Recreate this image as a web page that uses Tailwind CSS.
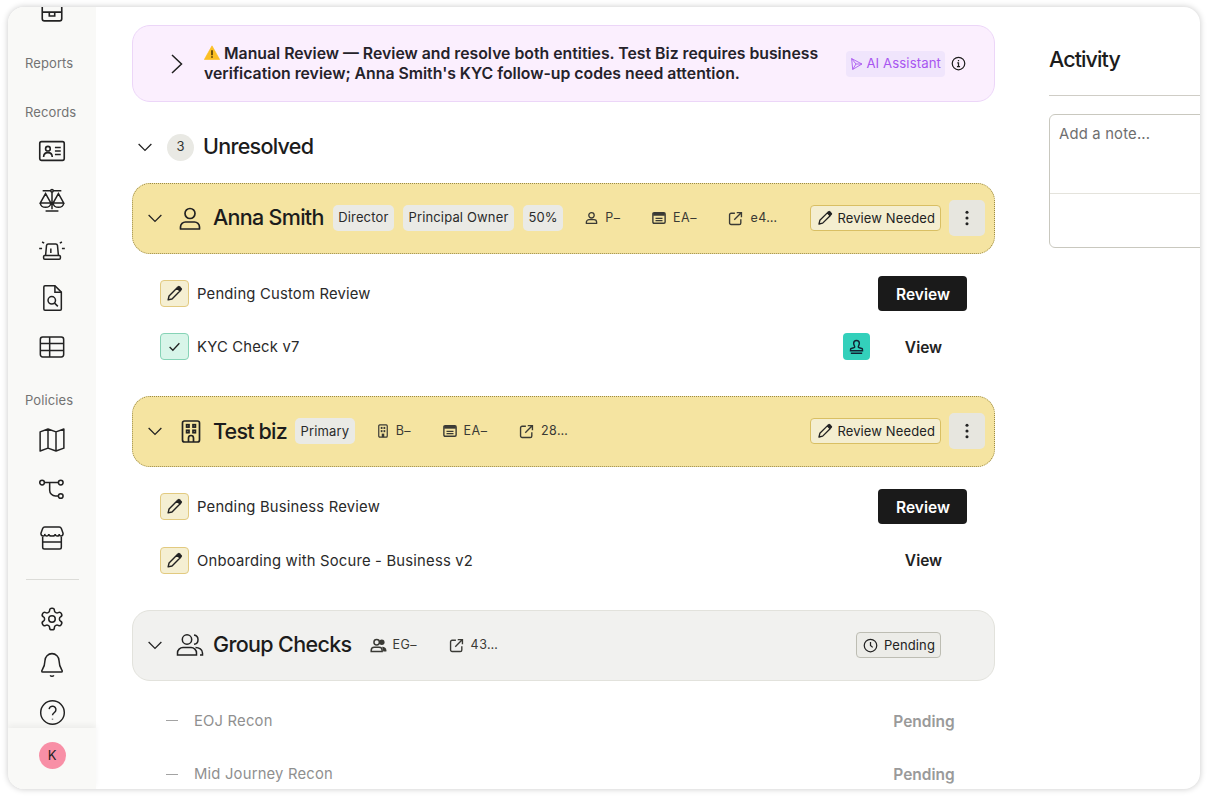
<!DOCTYPE html>
<html lang="en">
<head>
<meta charset="utf-8">
<title>Review</title>
<script src="https://cdn.jsdelivr.net/npm/@tailwindcss/browser@4"></script>
</head>
<body class="bg-white font-['Inter',sans-serif] text-[#1f1f1f] overflow-hidden">
<svg width="0" height="0" class="absolute">
  <defs>
    <symbol id="chev-d" viewBox="0 0 24 24"><path d="M3.5 8l8.5 8.5L20.5 8" fill="none" stroke="currentColor" stroke-width="1.7"/></symbol>
    <symbol id="person" viewBox="0 0 24 24"><g fill="none" stroke="currentColor" stroke-width="1.7"><circle cx="12" cy="7" r="5"/><path d="M2.500 22.500v-2c0-3 2.500-5 5-5h9c2.500 0 5 2 5 5v2z" stroke-linejoin="round"/></g></symbol>
    <symbol id="person-sm" viewBox="0 0 24 24"><g fill="none" stroke="currentColor" stroke-width="2.400"><circle cx="12" cy="7" r="5"/><path d="M2.500 22v-2c0-3 2.500-5 5-5h9c2.500 0 5 2 5 5v2z" stroke-linejoin="round"/></g></symbol>
    <symbol id="window" viewBox="0 0 24 24"><rect x="1.500" y="3" width="21" height="18" rx="2" fill="none" stroke="currentColor" stroke-width="2.400"/><path d="M2 3.500h20v4.500H2z" fill="currentColor"/><path d="M6 12.500h12M6 16.500h12" stroke="currentColor" stroke-width="2.200"/></symbol>
    <symbol id="ext" viewBox="0 0 24 24"><g fill="none" stroke="currentColor" stroke-width="2.200"><path d="M11 3.500H5a2.500 2.500 0 0 0-2.500 2.500v13A2.500 2.500 0 0 0 5 21.500h13a2.500 2.500 0 0 0 2.500-2.500v-6"/><path d="M10 14L21.500 2.500M14 2.500h7.500V10"/></g></symbol>
    <symbol id="pencil" viewBox="0 0 24 24"><path d="M3 21l1.300-5.500L15.500 4.300l4.200 4.200L8.500 19.700z" fill="none" stroke="currentColor" stroke-width="2" stroke-linejoin="round"/><path d="M15 3.800l2-2a1.700 1.700 0 0 1 2.400 0l2.800 2.800a1.700 1.700 0 0 1 0 2.400l-2 2z" fill="currentColor"/></symbol>
    <symbol id="dots" viewBox="0 0 24 24"><circle cx="12" cy="3.500" r="2.300" fill="currentColor"/><circle cx="12" cy="12" r="2.300" fill="currentColor"/><circle cx="12" cy="20.500" r="2.300" fill="currentColor"/></symbol>
    <symbol id="building" viewBox="0 0 24 24"><g fill="none" stroke="currentColor" stroke-width="1.700"><rect x="3.500" y="1.500" width="17" height="21" rx="2"/><path d="M9.500 22.500v-4a2.500 2.500 0 0 1 5 0v4"/><rect x="7.600" y="5.200" width="2.400" height="2.400"/><rect x="14" y="5.200" width="2.400" height="2.400"/><rect x="7.600" y="10.800" width="2.400" height="2.400"/><rect x="14" y="10.800" width="2.400" height="2.400"/></g></symbol>
    <symbol id="building-sm" viewBox="0 0 24 24"><g fill="none" stroke="currentColor" stroke-width="2.400"><rect x="3.500" y="1.500" width="17" height="21" rx="2"/></g><g fill="currentColor"><rect x="7.500" y="5" width="3.500" height="3.500"/><rect x="13" y="5" width="3.500" height="3.500"/><rect x="7.500" y="10.500" width="3.500" height="3.500"/><rect x="13" y="10.500" width="3.500" height="3.500"/><rect x="9.500" y="16.500" width="5" height="6"/></g></symbol>
  </defs>
</svg>
<div class="p-[7px_8px_10px_8px] h-[799px]">
  <div class="flex h-[782px] w-[1192px] overflow-hidden rounded-[16px] bg-white shadow-[0_0_6px_rgba(0,0,0,0.22)]">

    <!-- Sidebar -->
    <aside class="relative w-[88px] shrink-0 bg-[#f9f9f7] flex flex-col items-center text-[#222]">
      <div class="flex flex-col items-center -mt-[10.500px] w-full">
        <svg class="w-[26px] h-[26px] shrink-0" viewBox="0 0 24 24" fill="none" stroke="currentColor" stroke-width="1.500"><path d="M3 3h18v17a2 2 0 0 1-2 2H5a2 2 0 0 1-2-2z"/><path d="M3 14h18M9.500 14v3.500h5V14"/></svg>
        <div class="mt-[30px] self-start pl-[17px] h-[20px] leading-[20px] text-[13px] tracking-[0.1px] text-[#737373]">Reports</div>
        <div class="mt-[29px] self-start pl-[17px] h-[20px] leading-[20px] text-[13px] tracking-[0.1px] text-[#737373]">Records</div>
        <div class="h-[49px] mt-[4.500px] flex items-center justify-center"><svg class="w-[28px] h-[28px]" viewBox="0 0 24 24" fill="none" stroke="currentColor" stroke-width="1.400"><rect x="1.500" y="4" width="21" height="16" rx="1.500"/><circle cx="8.500" cy="10" r="2"/><path d="M4.800 17.200c0-2.600 1.800-3.800 3.700-3.800s3.700 1.200 3.700 3.800M14.500 9h5M14.500 12h5M14.500 15h5"/></svg></div>
        <div class="h-[49px] flex items-center justify-center"><svg class="w-[28px] h-[28px]" viewBox="0 0 24 24" fill="none" stroke="currentColor" stroke-width="1.300"><circle cx="12" cy="4" r="1.100"/><path d="M12 5v15M6.500 21.500h11M4 4h6.900M13.100 4h6.900M2 14.500l4.500-8 4.500 8zM2 14.500a4.500 3.800 0 0 0 9 0M13 14.500l4.500-8 4.500 8zM13 14.500a4.500 3.800 0 0 0 9 0"/></svg></div>
        <div class="h-[49px] flex items-center justify-center"><svg class="w-[28px] h-[28px]" viewBox="0 0 24 24" fill="none" stroke="currentColor" stroke-width="1.300"><path d="M6.500 17.500L7.300 9A1.500 1.500 0 0 1 8.800 7.800h6.400A1.500 1.500 0 0 1 16.700 9l.8 8.500"/><rect x="4.800" y="17.500" width="14.400" height="3.200" rx="1"/><path d="M11 11.500v4M1 11.500h2.500M20.500 11.500H23M3.500 6l1.800 1M20.500 6l-1.800 1"/></svg></div>
        <div class="h-[49px] flex items-center justify-center"><svg class="w-[28px] h-[28px]" viewBox="0 0 24 24" fill="none" stroke="currentColor" stroke-width="1.300"><path d="M6 1.500h8.500L20 7v14.500a1 1 0 0 1-1 1H6a1 1 0 0 1-1-1v-19a1 1 0 0 1 1-1z"/><path d="M14.500 1.500V7H20"/><circle cx="11.800" cy="14" r="3.200"/><path d="M14.200 16.400l2.800 2.800"/></svg></div>
        <div class="h-[49px] flex items-center justify-center"><svg class="w-[28px] h-[28px]" viewBox="0 0 24 24" fill="none" stroke="currentColor" stroke-width="1.300"><rect x="2" y="3.500" width="20" height="17" rx="2"/><path d="M2 9h20M2 15h20M10 3.500v17"/></svg></div>
        <div class="mt-[19px] self-start pl-[17px] h-[20px] leading-[20px] text-[13px] tracking-[0.1px] text-[#737373]">Policies</div>
        <div class="h-[49px] mt-[5.500px] flex items-center justify-center"><svg class="w-[30px] h-[30px]" viewBox="0 0 24 24" fill="none" stroke="currentColor" stroke-width="1.200"><path d="M2.500 5.500l6.300-2.300 6.400 2.300 6.300-2.300v15.300l-6.300 2.300-6.400-2.300-6.300 2.300zM8.800 3.200v15.300M15.200 5.500v15.300" stroke-linejoin="round"/></svg></div>
        <div class="h-[49px] flex items-center justify-center"><svg class="w-[28px] h-[28px]" viewBox="0 0 24 24" fill="none" stroke="currentColor" stroke-width="1.300"><circle cx="3.500" cy="6.500" r="2"/><circle cx="19.500" cy="6.500" r="2"/><circle cx="19.500" cy="18" r="2"/><path d="M5.500 6.500h12M10 6.500V13a5 5 0 0 0 5 5h2.500"/></svg></div>
        <div class="h-[49px] flex items-center justify-center"><svg class="w-[28px] h-[28px]" viewBox="0 0 24 24" fill="none" stroke="currentColor" stroke-width="1.300"><path d="M6 2.500h12a2 2 0 0 1 2 1.300L21.500 8c0 3-3.400 3-3.300.5 0 2.500-3.500 2.500-3.400 0 0 2.500-5.600 2.500-5.600 0 .1 2.500-3.400 2.500-3.400 0C6.300 11 2.500 11 2.500 8L4 3.800a2 2 0 0 1 2-1.300z"/><path d="M4 11v9a1.500 1.500 0 0 0 1.500 1.500h13A1.500 1.500 0 0 0 20 20v-9M4 15.500h16"/></svg></div>
        <div class="w-[53px] h-px bg-[#dcdcd8] mt-[16px]"></div>
        <div class="h-[46px] mt-[16.500px] flex items-center justify-center"><svg class="w-[26px] h-[26px]" viewBox="0 0 24 24" fill="none" stroke="currentColor" stroke-width="1.400"><path d="M12.220 2h-.44a2 2 0 0 0-2 2v.18a2 2 0 0 1-1 1.730l-.43.25a2 2 0 0 1-2 0l-.15-.08a2 2 0 0 0-2.730.73l-.22.38a2 2 0 0 0 .73 2.730l.15.1a2 2 0 0 1 1 1.720v.51a2 2 0 0 1-1 1.740l-.15.09a2 2 0 0 0-.73 2.730l.22.38a2 2 0 0 0 2.730.73l.15-.08a2 2 0 0 1 2 0l.43.25a2 2 0 0 1 1 1.730V20a2 2 0 0 0 2 2h.44a2 2 0 0 0 2-2v-.18a2 2 0 0 1 1-1.730l.43-.25a2 2 0 0 1 2 0l.15.08a2 2 0 0 0 2.730-.73l.22-.39a2 2 0 0 0-.73-2.730l-.15-.08a2 2 0 0 1-1-1.740v-.5a2 2 0 0 1 1-1.740l.15-.09a2 2 0 0 0 .73-2.730l-.22-.38a2 2 0 0 0-2.730-.73l-.15.08a2 2 0 0 1-2 0l-.43-.25a2 2 0 0 1-1-1.730V4a2 2 0 0 0-2-2z"/><circle cx="12" cy="12" r="3"/></svg></div>
        <div class="h-[46px] flex items-center justify-center"><svg class="w-[26px] h-[26px]" viewBox="0 0 24 24" fill="none" stroke="currentColor" stroke-width="1.400"><path d="M12 1.500a6.500 6.500 0 0 0-6.500 6.500c0 5.500-3 9-3 9.500 0 .6.400 1 1 1h17c.6 0 1-.4 1-1 0-.5-3-4-3-9.500A6.500 6.500 0 0 0 12 1.500zM10.300 21.500a2 2 0 0 0 3.400 0"/></svg></div>
        <div class="h-[49px] flex items-center justify-center"><svg class="w-[27px] h-[27px]" viewBox="0 0 24 24" fill="none" stroke="currentColor" stroke-width="1.300"><circle cx="12" cy="12" r="10.500"/><path d="M9 9a3 3 0 0 1 6 .8c0 2.200-3 2.700-3 4.700M12 17.500v.8"/></svg></div>
      </div>
      <div class="absolute bottom-0 left-0 right-0 h-[61px] bg-[#f9f9f7] shadow-[0_-3px_6px_rgba(0,0,0,0.05)] flex justify-center pt-[14px]">
        <div class="w-[27px] h-[27px] rounded-full bg-[#f88fa6] flex items-center justify-center text-[13px] text-[#222]">K</div>
      </div>
    </aside>

    <!-- Main -->
    <main class="w-[863px] shrink-0 ml-[36px] pt-[18px]">
      <div class="h-[77px] rounded-[18px] border border-[#ecd6f8] bg-[#fbeffe] flex items-center pl-[32px] pr-[28px]">
        <svg class="w-[24px] h-[24px] shrink-0 text-[#1f1f1f]" viewBox="0 0 24 24"><path d="M7 3l9.500 9L7 21" fill="none" stroke="currentColor" stroke-width="1.500"/></svg>
        <p class="ml-[15px] w-[625px] text-[15.800px] leading-[20px] font-semibold text-[#25222a] whitespace-nowrap"><svg class="inline-block w-[16px] h-[15px] align-[-1px] mr-[4px]" viewBox="0 0 24 22"><path d="M12 1L23.500 21.500H.5z" fill="#fbbf24" stroke="#fbbf24" stroke-linejoin="round"/><path d="M12 7.500v7.500M12 16.800v2" stroke="#3a2a05" stroke-width="2.200"/></svg>Manual Review — Review and resolve both entities. Test Biz requires business<br>verification review; Anna Smith's KYC follow-up codes need attention.</p>
        <div class="ml-auto h-[26px] px-[4px] rounded-[4px] bg-[#f0e5fc] flex items-center gap-[3px] text-[13.200px] text-[#a855f0] tracking-[0.1px]">
          <svg class="w-[13px] h-[14px]" viewBox="0 0 24 24" fill="none" stroke="currentColor" stroke-width="1.600"><path d="M3 2l19 10L5 22zM3 2l8 10-6 10M11 12h11" stroke-linejoin="round"/></svg>
          AI Assistant
        </div>
        <svg class="w-[15px] h-[15px] ml-[6px]" viewBox="0 0 24 24" fill="none" stroke="currentColor" stroke-width="2"><circle cx="12" cy="12" r="10"/><path d="M10 11h2v6M9.500 17h5M12 6.500v2" /></svg>
      </div>

      <div class="mt-[25px] mb-[15.700px] h-[40px] flex items-center pl-[4px]">
        <svg class="w-[18px] h-[18px] text-[#222]" viewBox="0 0 24 24"><use href="#chev-d"/></svg>
        <div class="ml-[13px] w-[27px] h-[27px] rounded-full bg-[#e9e9e4] flex items-center justify-center text-[13px] text-[#333]">3</div>
        <h2 class="ml-[9px] -mt-[2px] text-[21.500px] font-medium tracking-[-0.7px] text-[#1c1c1c]">Unresolved</h2>
      </div>

      <!-- Anna -->
      <div class="h-[71px] rounded-[18px] border border-dotted border-[#9b8a45] bg-[#f5e4a1] flex items-center pl-[13px] pr-[9px]">
        <svg class="w-[18px] h-[18px] shrink-0 text-[#222]" viewBox="0 0 24 24"><use href="#chev-d"/></svg>
        <svg class="ml-[14px] w-[24px] h-[25px] shrink-0 text-[#222]" viewBox="0 0 24 24"><use href="#person"/></svg>
        <h3 class="ml-[11px] -mt-[2px] text-[21.500px] font-medium tracking-[-0.7px] text-[#1c1c1c] whitespace-nowrap">Anna Smith</h3>
        <span class="ml-[9px] h-[26px] px-[5.500px] rounded-[5px] bg-[#eaeae5] flex items-center text-[13px] tracking-[0.15px] text-[#2a2a2a]">Director</span>
        <span class="ml-[9px] h-[26px] px-[5.500px] rounded-[5px] bg-[#eaeae5] flex items-center text-[13px] tracking-[0.15px] text-[#2a2a2a]">Principal Owner</span>
        <span class="ml-[9px] h-[26px] px-[5.500px] rounded-[5px] bg-[#eaeae5] flex items-center text-[13px] tracking-[0.15px] text-[#2a2a2a]">50%</span>
        <div class="ml-[22px] flex items-center gap-[31.500px] text-[12.500px] tracking-[0.5px] text-[#3a3a35]">
          <span class="flex items-center gap-[7px]"><svg class="w-[13px] h-[14px]" viewBox="0 0 24 24"><use href="#person-sm"/></svg>P–</span>
          <span class="flex items-center gap-[7px]"><svg class="w-[14px] h-[14px]" viewBox="0 0 24 24"><use href="#window"/></svg>EA–</span>
          <span class="flex items-center gap-[7px]"><svg class="w-[15px] h-[15px]" viewBox="0 0 24 24"><use href="#ext"/></svg>e4…</span>
        </div>
        <div class="ml-auto mr-[-1px] h-[26px] pl-[6px] pr-[5px] rounded-[4px] border border-[#d9bf63] bg-[#f4eed0] flex items-center gap-[4px] text-[13px] tracking-[0.12px] text-[#222]">
          <svg class="w-[16px] h-[16px]" viewBox="0 0 24 24"><use href="#pencil"/></svg><span class="pt-px">Review Needed</span>
        </div>
        <button class="ml-[9px] w-[36px] h-[36px] rounded-[5px] bg-[#e7e6df] flex items-center justify-center text-[#222]"><svg class="w-[16px] h-[16px]" viewBox="0 0 24 24"><use href="#dots"/></svg></button>
      </div>

      <div class="pt-[13.300px] pb-[22.300px] px-[28px]">
        <div class="h-[53.300px] flex items-center">
          <span class="w-[29px] h-[27px] rounded-[4px] border-[1.500px] border-[#e2ca80] bg-[#f5efd2] flex items-center justify-center text-[#222]"><svg class="w-[17px] h-[17px]" viewBox="0 0 24 24"><use href="#pencil"/></svg></span>
          <span class="ml-[8px] pt-px text-[14.800px] tracking-[0.2px] text-[#2a2a2a]">Pending Custom Review</span>
          <button class="ml-auto w-[89px] h-[35px] rounded-[4px] bg-[#1a1a1a] pl-px pt-px text-white text-[15.500px] font-semibold">Review</button>
        </div>
        <div class="h-[53.300px] flex items-center">
          <span class="w-[29px] h-[27px] rounded-[4px] border-[1.500px] border-[#86d3b6] bg-[#d8f5e9] flex items-center justify-center text-[#222]"><svg class="w-[13px] h-[13px]" viewBox="0 0 24 24"><path d="M3 13l6 6L21 6" fill="none" stroke="currentColor" stroke-width="2.400"/></svg></span>
          <span class="ml-[8px] pt-px text-[14.800px] tracking-[0.2px] text-[#2a2a2a]">KYC Check v7</span>
          <span class="ml-auto w-[27px] h-[27px] rounded-[4px] bg-[#33d0bb] flex items-center justify-center text-[#123]"><svg class="w-[17px] h-[17px]" viewBox="0 0 24 24" fill="none" stroke="currentColor" stroke-width="2"><path d="M9.500 13c0-2-1.500-3-1.500-5.500a4 4 0 0 1 8 0c0 2.500-1.500 3.500-1.500 5.500 0 1 4.500 1 5.500 2 .5.500.5 1.500.5 3H3.500c0-1.500 0-2.500.5-3 1-1 5.500-1 5.500-2zM4 21.500h16"/></svg></span>
          <button class="ml-[8px] w-[89px] pl-[2px] pt-px text-[15.500px] font-semibold text-[#222]">View</button>
        </div>
      </div>

      <!-- Test biz -->
      <div class="h-[71px] rounded-[18px] border border-dotted border-[#9b8a45] bg-[#f5e4a1] flex items-center pl-[13px] pr-[9px]">
        <svg class="w-[18px] h-[18px] shrink-0 text-[#222]" viewBox="0 0 24 24"><use href="#chev-d"/></svg>
        <svg class="ml-[15px] w-[24px] h-[25px] shrink-0 text-[#222]" viewBox="0 0 24 24"><use href="#building"/></svg>
        <h3 class="ml-[10px] -mt-[1px] text-[21.500px] font-medium tracking-[-0.8px] text-[#1c1c1c] whitespace-nowrap">Test biz</h3>
        <span class="ml-[8px] h-[26px] px-[5.500px] rounded-[5px] bg-[#eaeae5] flex items-center text-[13px] tracking-[0.15px] text-[#2a2a2a]">Primary</span>
        <div class="ml-[22px] flex items-center gap-[31.500px] text-[12.500px] tracking-[0.5px] text-[#3a3a35]">
          <span class="flex items-center gap-[7px]"><svg class="w-[12px] h-[14px]" viewBox="0 0 24 24" preserveAspectRatio="none"><use href="#building-sm"/></svg>B–</span>
          <span class="flex items-center gap-[7px]"><svg class="w-[14px] h-[14px]" viewBox="0 0 24 24"><use href="#window"/></svg>EA–</span>
          <span class="flex items-center gap-[7px]"><svg class="w-[15px] h-[15px]" viewBox="0 0 24 24"><use href="#ext"/></svg>28…</span>
        </div>
        <div class="ml-auto mr-[-1px] h-[26px] pl-[6px] pr-[5px] rounded-[4px] border border-[#d9bf63] bg-[#f4eed0] flex items-center gap-[4px] text-[13px] tracking-[0.12px] text-[#222]">
          <svg class="w-[16px] h-[16px]" viewBox="0 0 24 24"><use href="#pencil"/></svg><span class="pt-px">Review Needed</span>
        </div>
        <button class="ml-[9px] w-[36px] h-[36px] rounded-[5px] bg-[#e7e6df] flex items-center justify-center text-[#222]"><svg class="w-[16px] h-[16px]" viewBox="0 0 24 24"><use href="#dots"/></svg></button>
      </div>

      <div class="pt-[13.300px] pb-[23px] px-[28px]">
        <div class="h-[53.300px] flex items-center">
          <span class="w-[29px] h-[27px] rounded-[4px] border-[1.500px] border-[#e2ca80] bg-[#f5efd2] flex items-center justify-center text-[#222]"><svg class="w-[17px] h-[17px]" viewBox="0 0 24 24"><use href="#pencil"/></svg></span>
          <span class="ml-[8px] pt-px text-[14.800px] tracking-[0.2px] text-[#2a2a2a]">Pending Business Review</span>
          <button class="ml-auto w-[89px] h-[35px] rounded-[4px] bg-[#1a1a1a] pl-px pt-px text-white text-[15.500px] font-semibold">Review</button>
        </div>
        <div class="h-[53.300px] flex items-center">
          <span class="w-[29px] h-[27px] rounded-[4px] border-[1.500px] border-[#e2ca80] bg-[#f5efd2] flex items-center justify-center text-[#222]"><svg class="w-[17px] h-[17px]" viewBox="0 0 24 24"><use href="#pencil"/></svg></span>
          <span class="ml-[8px] pt-[2px] text-[14.800px] tracking-[0.2px] text-[#2a2a2a]">Onboarding with Socure - Business v2</span>
          <button class="ml-auto w-[89px] pl-[2px] pt-[2px] text-[15.500px] font-semibold text-[#222]">View</button>
        </div>
      </div>

      <!-- Group Checks -->
      <div class="h-[71px] rounded-[18px] border border-[#e2e2dc] bg-[#f1f1ef] flex items-center pl-[13px] pr-[53px]">
        <svg class="w-[18px] h-[18px] shrink-0 text-[#222]" viewBox="0 0 24 24"><use href="#chev-d"/></svg>
        <svg class="ml-[12px] w-[28px] h-[26px] shrink-0 text-[#222]" viewBox="0 0 28 24" fill="none" stroke="currentColor" stroke-width="1.500"><circle cx="11" cy="6.500" r="4.700"/><path d="M18 2a4.700 4.700 0 0 1 0 9.300M1.500 22v-2c0-3 2.500-5.500 5.500-5.500h8c3 0 5.500 2.500 5.500 5.500v2zM19.500 14.500c3.500 0 7 2 7 5.500v2h-2.500"/></svg>
        <h3 class="ml-[9px] -mt-[2px] text-[21.500px] font-medium tracking-[-0.65px] text-[#1c1c1c] whitespace-nowrap">Group Checks</h3>
        <div class="ml-[19px] flex items-center gap-[31.500px] text-[12.500px] tracking-[0.5px] text-[#3a3a35]">
          <span class="flex items-center gap-[5px]"><svg class="w-[17px] h-[15px]" viewBox="0 0 28 24" fill="currentColor"><circle cx="11" cy="6.500" r="4.500" fill="none" stroke="currentColor" stroke-width="2.500"/><circle cx="19.500" cy="6.500" r="4.500"/><path d="M2 22v-2c0-3 2.500-5 5-5h8c2.500 0 5 2 5 5v2z" fill="none" stroke="currentColor" stroke-width="2.500"/><path d="M20 14c4 0 7 2 7 6v2h-5z"/></svg>EG–</span>
          <span class="flex items-center gap-[7px]"><svg class="w-[15px] h-[15px]" viewBox="0 0 24 24"><use href="#ext"/></svg>43…</span>
        </div>
        <div class="ml-auto h-[26px] pl-[6px] pr-[5px] rounded-[4px] border border-[#bdbdb3] bg-[#ecece8] flex items-center gap-[6px] text-[13px] tracking-[0.12px] text-[#222]">
          <svg class="w-[15px] h-[15px]" viewBox="0 0 24 24" fill="none" stroke="currentColor" stroke-width="2"><circle cx="12" cy="12" r="10"/><path d="M12 6.500V12l3.500 3"/></svg>Pending
        </div>
      </div>

      <div class="pt-[13.300px] pl-[34px] pr-[27px]">
        <div class="h-[53.300px] flex items-center">
          <span class="w-[12px] h-px bg-[#a3a3a3]"></span>
          <span class="ml-[16px] pt-px text-[14.800px] tracking-[0.2px] text-[#8f8f8f]">EOJ Recon</span>
          <span class="ml-auto w-[89px] pl-px pt-px text-center text-[15.500px] font-semibold text-[#9a9a9a]">Pending</span>
        </div>
        <div class="h-[53.300px] flex items-center">
          <span class="w-[12px] h-px bg-[#a3a3a3]"></span>
          <span class="ml-[16px] pt-px text-[14.800px] tracking-[0.2px] text-[#8f8f8f]">Mid Journey Recon</span>
          <span class="ml-auto w-[89px] pl-px pt-px text-center text-[15.500px] font-semibold text-[#9a9a9a]">Pending</span>
        </div>
      </div>
    </main>

    <!-- Activity -->
    <section class="ml-[54px] w-[240px] shrink-0">
      <h2 class="pt-[39px] h-[88.500px] text-[21.500px] leading-[26px] font-medium tracking-[-0.9px] text-[#1c1c1c] border-b border-[#cfcdc6]">Activity</h2>
      <div class="mt-[18.500px] h-[134px] rounded-[6px] border border-[#c9c8bf] flex flex-col">
        <div class="h-[79px] px-[9px] pt-[9px] text-[14.800px] leading-[20px] tracking-[0.2px] text-[#6e6e6e] border-b border-[#e4e3dc]">Add a note...</div>
      </div>
    </section>
  </div>
</div>
</body>
</html>
